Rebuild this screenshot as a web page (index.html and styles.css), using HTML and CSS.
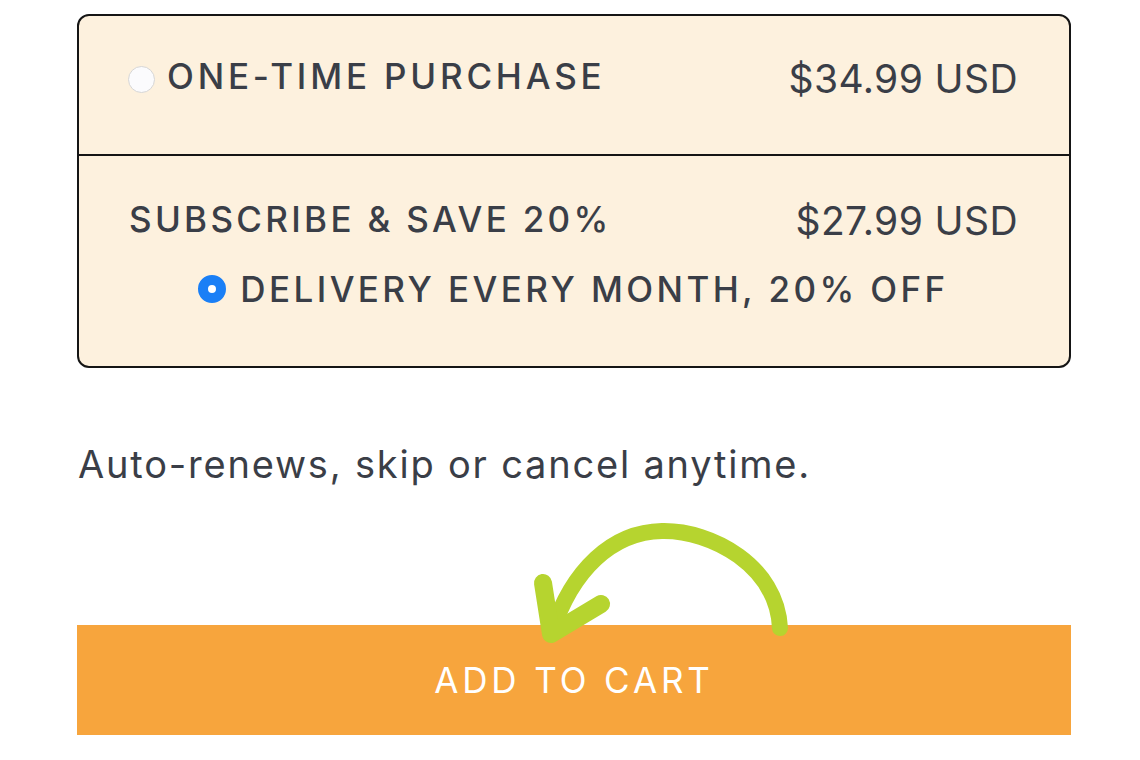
FILE: index.html
```html
<!DOCTYPE html>
<html lang="en">
<head>
<meta charset="utf-8">
<title>Subscribe</title>
<link rel="stylesheet" href="styles.css">
</head>
<body>
<div class="page">
  <div class="plans">
    <div class="plan plan-once">
      <div class="opt">
        <span class="radio"></span>
        <span class="label label-once">ONE-TIME PURCHASE</span>
      </div>
      <span class="price">$34.99 USD</span>
    </div>
    <div class="plan plan-sub">
      <div class="sub-head">
        <span class="label label-sub">SUBSCRIBE &amp; SAVE 20%</span>
        <span class="price">$27.99 USD</span>
      </div>
      <div class="sub-opt">
        <span class="radio radio-on"></span>
        <span class="label label-delivery">DELIVERY EVERY MONTH, 20% OFF</span>
      </div>
    </div>
  </div>
  <p class="note">Auto-renews, skip or cancel anytime.</p>
  <div class="cart">
    <button class="cart-btn" type="button">ADD TO CART</button>
    <svg class="arrow" viewBox="517 515 280 140" width="280" height="140" aria-hidden="true">
      <path d="M780 628 C777 566 712 530 662 531 C612 532 572 570 552 632" fill="none" stroke="#b6d42f" stroke-width="16" stroke-linecap="round"/>
      <path d="M543 583 L551 634 L601 604" fill="none" stroke="#b6d42f" stroke-width="18" stroke-linecap="round" stroke-linejoin="round"/>
    </svg>
  </div>
</div>
</body>
</html>
```

FILE: styles.css
```css
html, body {
  margin: 0;
  padding: 0;
  background: #ffffff;
}

body {
  font-family: Inter, "Noto Sans", "DejaVu Sans", sans-serif;
  color: #3a3e47;
}

.page {
  width: 994px;
  padding: 14px 0 0 77px;
}

.plans {
  border: 2px solid #151515;
  border-radius: 12px;
  background: #fdf1de;
  overflow: hidden;
}

.plan-once {
  height: 140px;
  box-sizing: border-box;
  padding: 0 51px 12px 49px;
  display: flex;
  align-items: center;
  justify-content: space-between;
  border-bottom: 2px solid #151515;
}

.opt,
.sub-opt {
  display: flex;
  align-items: center;
  gap: 12px;
}

.sub-opt {
  gap: 14px;
}

.radio {
  width: 27px;
  height: 27px;
  box-sizing: border-box;
  border-radius: 50%;
  border: 1.5px solid #d6d6d6;
  background: #fbfbfd;
  flex: none;
}

.radio-on {
  width: 28px;
  height: 28px;
  border: 10px solid #1a7ff6;
  background: #ffffff;
}

.label {
  font-size: 35px;
  font-weight: 500;
  letter-spacing: 3.4px;
  line-height: 44px;
}

.label-once {
  letter-spacing: 3.8px;
  margin-bottom: 6px;
}

.label-sub {
  letter-spacing: 3.3px;
  margin-bottom: 4px;
}

.price {
  font-size: 39px;
  font-weight: 400;
  line-height: 44px;
  letter-spacing: 0.4px;
}

.plan-sub {
  padding: 41px 51px 55px 50px;
}

.sub-head {
  display: flex;
  justify-content: space-between;
  align-items: center;
}

.sub-opt {
  justify-content: center;
  margin-top: 22px;
}

.note {
  margin: 71px 0 0 1px;
  font-size: 38px;
  line-height: 50px;
  font-weight: 400;
  letter-spacing: 1.8px;
}

.cart {
  position: relative;
  margin-top: 136px;
}

.cart-btn {
  display: block;
  width: 994px;
  height: 110px;
  border: 0;
  background: #f7a53d;
  color: #ffffff;
  font-family: inherit;
  font-size: 35px;
  font-weight: 400;
  letter-spacing: 3.9px;
  padding: 0;
}

.arrow {
  position: absolute;
  left: 440px;
  top: -110px;
  overflow: visible;
}
```
